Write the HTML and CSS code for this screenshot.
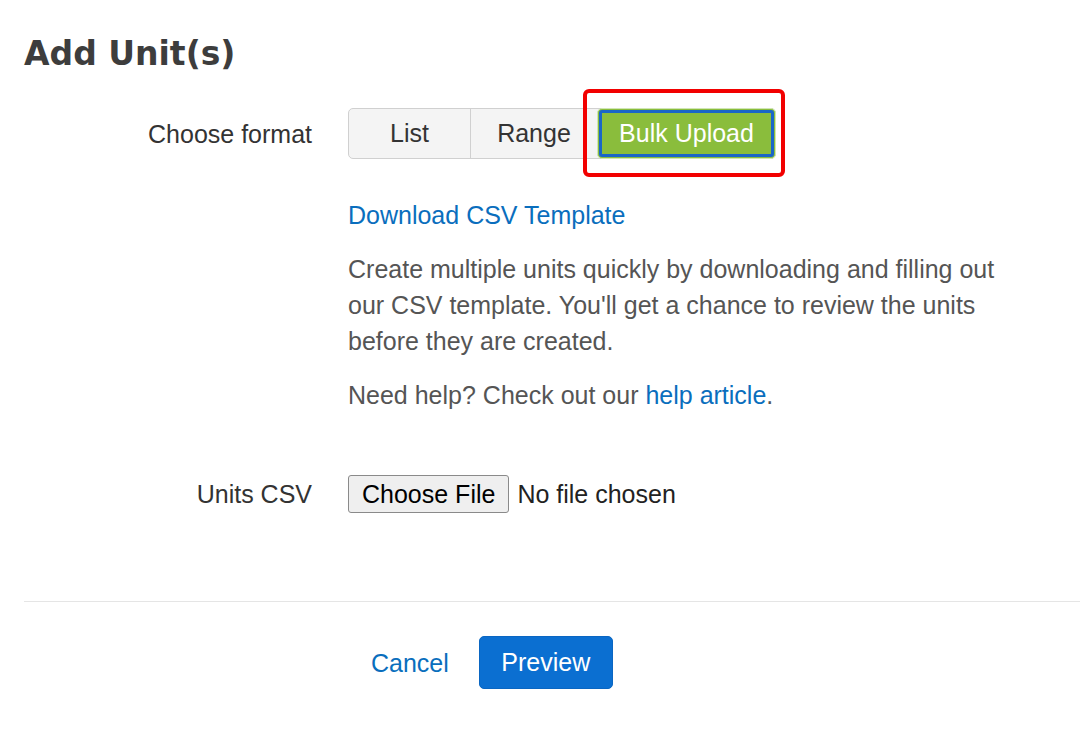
FILE: index.html
```html
<!DOCTYPE html>
<html lang="en">
<head>
<meta charset="utf-8">
<title>Add Unit(s)</title>
<link rel="stylesheet" href="styles.css">
</head>
<body>
<div class="page">
  <h1 class="title">Add Unit(s)</h1>

  <div class="form-row format-row">
    <div class="label">Choose format</div>
    <div class="field">
      <div class="segmented">
        <button class="seg seg-list">List</button>
        <button class="seg seg-range">Range</button>
        <span class="seg-wrap">
          <button class="seg seg-active">Bulk Upload</button>
        </span>
      </div>
    </div>
  </div>

  <div class="form-row info-row">
    <div class="label"></div>
    <div class="field info">
      <a class="link download" href="#">Download CSV Template</a>
      <p class="desc intro">Create multiple units quickly by downloading and filling out our CSV template. You'll get a chance to review the units before they are created.</p>
      <p class="desc help">Need help? Check out our <a class="link" href="#">help article</a>.</p>
    </div>
  </div>

  <div class="form-row csv-row">
    <div class="label">Units CSV</div>
    <div class="field file-field">
      <span class="file-btn">Choose File</span>
      <span class="file-name">No file chosen</span>
    </div>
  </div>

  <div class="divider"></div>

  <div class="actions">
    <a class="link cancel" href="#">Cancel</a>
    <button class="btn-primary">Preview</button>
  </div>
</div>
</body>
</html>
```

FILE: styles.css
```css
html, body {
  margin: 0;
  padding: 0;
  background: #ffffff;
}

body {
  font-family: "Liberation Sans", Arial, sans-serif;
  font-size: 25px;
  line-height: 30px;
  color: #555555;
}

.page {
  padding: 0 0 0 24px;
}

.title {
  margin: 0;
  padding-top: 34px;
  font-family: "DejaVu Sans", sans-serif;
  font-weight: bold;
  font-size: 33px;
  line-height: 40px;
  color: #3d3d3d;
}

.form-row {
  display: flex;
  align-items: flex-start;
  gap: 36px;
}

.label {
  width: 288px;
  flex: none;
  text-align: right;
  color: #333333;
}

.format-row {
  margin-top: 34px;
  align-items: center;
}

.segmented {
  display: inline-flex;
  border: 1px solid #d0d0d0;
  border-radius: 5px;
  background: #f4f4f4;
  height: 51px;
  box-sizing: border-box;
}

.seg {
  font-family: "Liberation Sans", Arial, sans-serif;
  font-size: 25px;
  color: #333333;
  background: transparent;
  border: none;
  padding: 0;
  margin: 0;
  height: 49px;
}

.seg-list {
  width: 122px;
  border-right: 1px solid #d0d0d0;
}

.seg-range {
  width: 126px;
}

.seg-wrap {
  position: relative;
  display: flex;
}

.seg-wrap::after {
  content: "";
  position: absolute;
  left: -14px;
  right: -10px;
  top: -20px;
  bottom: -19px;
  border: 4px solid #f20000;
  border-radius: 6px;
  pointer-events: none;
}

.seg-active {
  width: 179px;
  height: 51px;
  margin: -1px -1px -1px 0;
  background: #8abd3c;
  color: #ffffff;
  border: 1px solid #cfe6b4;
  border-radius: 5px;
  outline: 3px solid #1a66c8;
  outline-offset: -5px;
}

.info-row {
  margin-top: 38px;
}

.info {
  display: flex;
  flex-direction: column;
}

.link {
  color: #0a6ebd;
  text-decoration: none;
}

.download {
  line-height: 36px;
}

.desc {
  margin: 0;
  line-height: 36px;
}

.intro {
  margin-top: 18px;
  max-width: 660px;
}

.help {
  margin-top: 18px;
}

.csv-row {
  margin-top: 62px;
  align-items: center;
}

.file-field {
  display: flex;
  align-items: center;
  gap: 8px;
}

.file-btn {
  display: inline-flex;
  align-items: center;
  height: 38px;
  box-sizing: border-box;
  padding: 0 13px;
  background: #efefef;
  border: 1px solid #8a8a8a;
  border-radius: 3px;
  color: #000000;
}

.file-name {
  color: #222222;
}

.divider {
  margin-top: 88px;
  height: 1px;
  background: #e5e5e5;
}

.actions {
  display: flex;
  align-items: center;
  padding-left: 324px;
  margin-top: 34px;
  gap: 7px;
}

.cancel {
  padding: 0 23px;
}

.btn-primary {
  font-family: "Liberation Sans", Arial, sans-serif;
  font-size: 25px;
  color: #ffffff;
  background: #0b6fd1;
  border: 1px solid #0a66c2;
  border-radius: 5px;
  height: 53px;
  width: 134px;
  padding: 0;
}
```
